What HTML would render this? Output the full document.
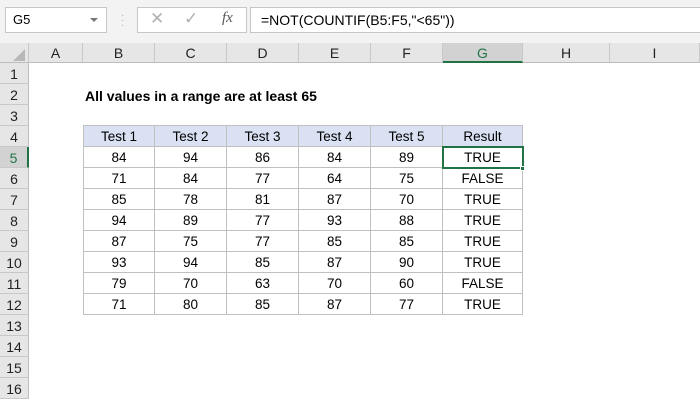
<!DOCTYPE html>
<html><head><style>
body{margin:0;width:700px;height:400px;overflow:hidden;background:#fff;font-family:"Liberation Sans",Calibri,sans-serif;position:relative}
.abs{position:absolute;box-sizing:border-box}
.top{left:0;top:0;width:700px;height:43px;background:#f3f3f3}
.box{background:#fff;border:1px solid #c6c6c6}
.ch{top:43px;height:20px;background:#e6e6e6;border-right:1px solid #c8c8c8;border-bottom:1px solid #bdbdbd;text-align:center;font-size:14px;line-height:20px;color:#222}
.rh{left:0;width:29px;height:21px;background:#e6e6e6;border-bottom:1px solid #c8c8c8;border-right:1px solid #bdbdbd;text-align:center;font-size:14px;line-height:22px;color:#222}
.c{height:21px;text-align:center;font-size:13.5px;line-height:22px;border-right:1px solid #c0c0c0;border-bottom:1px solid #c0c0c0;color:#000}
</style></head><body>
<div class="abs top"></div>
<div class="abs box" style="left:5px;top:7px;width:102px;height:26px;font-size:13px;line-height:24px;padding-left:7px">G5</div>
<div class="abs" style="left:90px;top:18px;width:0;height:0;border-left:4px solid transparent;border-right:4px solid transparent;border-top:4px solid #777"></div>
<div class="abs" style="left:121px;top:13px;color:#aaa;font-size:10px;line-height:5px">·<br>·<br>·</div>
<div class="abs box" style="left:137px;top:7px;width:110px;height:26px"></div>
<div class="abs" style="left:150px;top:9px;color:#b0b0b0;font-size:17px">✕</div>
<div class="abs" style="left:184px;top:9px;color:#b0b0b0;font-size:17px">✓</div>
<div class="abs" style="left:222px;top:10px;color:#555;font-size:15px;font-style:italic;font-family:'Liberation Serif',serif">fx</div>
<div class="abs box" style="left:250px;top:7px;width:460px;height:26px;font-size:14px;line-height:24px;padding-left:10px">=NOT(COUNTIF(B5:F5,"&lt;65"))</div>
<div class="abs ch" style="left:0;width:29px;background:#e6e6e6"></div>
<div class="abs" style="left:13px;top:49px;width:0;height:0;border-left:12px solid transparent;border-bottom:12px solid #b8b8b8"></div>
<div class="abs ch" style="left:29px;width:54px">A</div>
<div class="abs ch" style="left:83px;width:72px">B</div>
<div class="abs ch" style="left:155px;width:72px">C</div>
<div class="abs ch" style="left:227px;width:72px">D</div>
<div class="abs ch" style="left:299px;width:72px">E</div>
<div class="abs ch" style="left:371px;width:72px">F</div>
<div class="abs ch" style="left:443px;width:80px;background:#d2d2d2;border-bottom:2px solid #217346;color:#217346">G</div>
<div class="abs ch" style="left:523px;width:87px">H</div>
<div class="abs ch" style="left:610px;width:90px">I</div>
<div id="rows"></div>
<div class="abs" style="left:85px;top:87px;font-size:14px;font-weight:bold;line-height:18px">All values in a range are at least 65</div>
<div id="tbl"></div>
<script>
var h='';for(var i=1;i<=16;i++){var t=63+(i-1)*21;h+='<div class="abs rh" style="top:'+t+'px;'+(i==5?'background:#d2d2d2;color:#217346;border-right:2px solid #217346':'')+'">'+i+'</div>';}
document.getElementById('rows').innerHTML=h;
var d=[["Test 1","Test 2","Test 3","Test 4","Test 5","Result"],[84,94,86,84,89,"TRUE"],[71,84,77,64,75,"FALSE"],[85,78,81,87,70,"TRUE"],[94,89,77,93,88,"TRUE"],[87,75,77,85,85,"TRUE"],[93,94,85,87,90,"TRUE"],[79,70,63,70,60,"FALSE"],[71,80,85,87,77,"TRUE"]];
var xs=[83,155,227,299,371,443,523],s='';
for(var r=0;r<d.length;r++)for(var c=0;c<6;c++){var t=126+r*21;s+='<div class="abs c" style="left:'+xs[c]+'px;top:'+t+'px;width:'+(xs[c+1]-xs[c])+'px;'+(r==0?'background:#d9e1f2;border-top:1px solid #c0c0c0;height:22px;top:125px;':'')+(c==0?'border-left:1px solid #c0c0c0;':'')+'">'+d[r][c]+'</div>';}
s+='<div class="abs" style="left:442px;top:146px;width:82px;height:23px;border:2px solid #217346"></div><div class="abs" style="left:520px;top:166px;width:5px;height:5px;background:#217346;border:1px solid #fff"></div>';
document.getElementById('tbl').innerHTML=s;
</script>
</body></html>
